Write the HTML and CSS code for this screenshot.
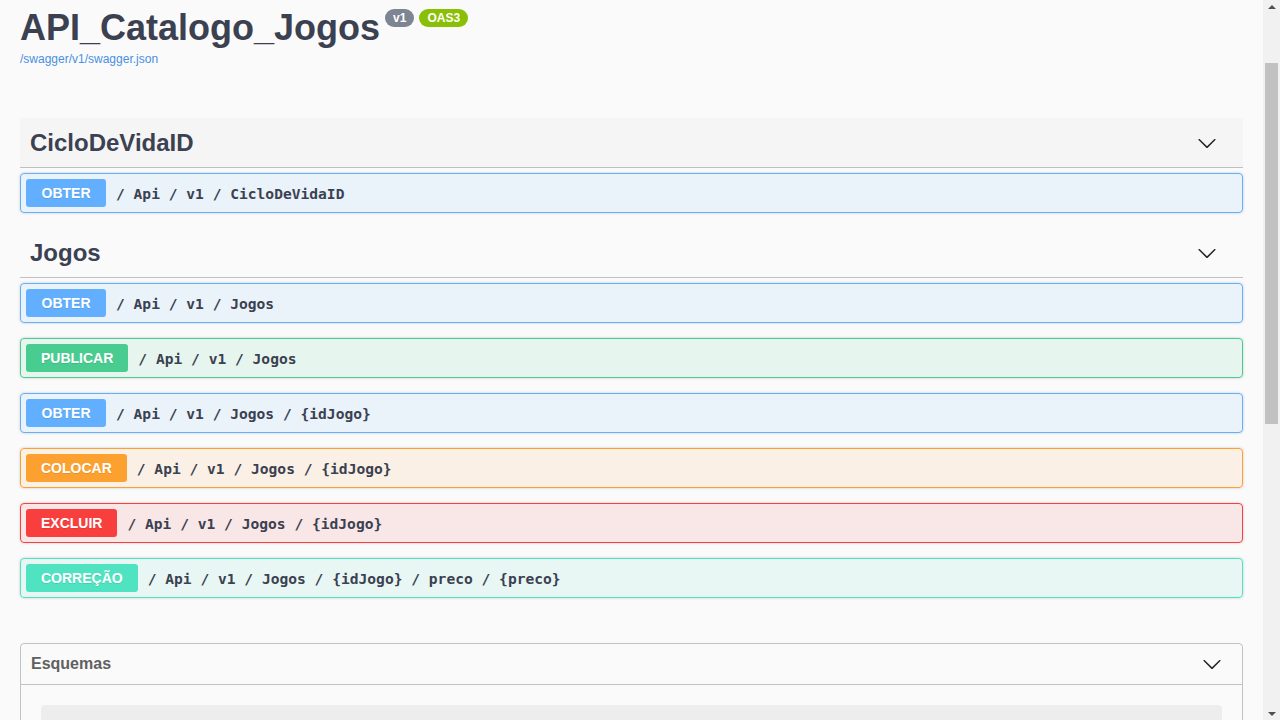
FILE: index.html
```html
<!DOCTYPE html>
<html lang="pt">
<head>
<meta charset="utf-8">
<title>Swagger UI</title>
<link rel="stylesheet" href="styles.css">
</head>
<body>
<div class="topbar"></div>
<div class="wrapper">
  <section class="info">
    <h2 class="title"><span class="title-text">API_Catalogo_Jogos</span><small class="badge badge-version">v1</small><small class="badge badge-oas">OAS3</small></h2>
    <a class="spec-link" href="#">/swagger/v1/swagger.json</a>
  </section>

  <section class="tag-section">
    <h3 class="opblock-tag is-hovered">
      <span class="tag-name">CicloDeVidaID</span>
      <button class="expand" type="button" aria-label="Expandir"><svg class="arrow" viewBox="0 0 20 20" width="20" height="20"><path d="M17.418 6.109c.272-.268.709-.268.979 0s.271.701 0 .969l-7.908 7.83c-.27.268-.707.268-.979 0l-7.908-7.83c-.27-.268-.27-.701 0-.969.271-.268.709-.268.979 0L10 13.25l7.418-7.141z"/></svg></button>
    </h3>
    <div class="opblock op-get"><div class="summary"><span class="method">OBTER</span><span class="path">/ Api / v1 / CicloDeVidaID</span></div></div>
  </section>

  <section class="tag-section">
    <h3 class="opblock-tag">
      <span class="tag-name">Jogos</span>
      <button class="expand" type="button" aria-label="Expandir"><svg class="arrow" viewBox="0 0 20 20" width="20" height="20"><path d="M17.418 6.109c.272-.268.709-.268.979 0s.271.701 0 .969l-7.908 7.83c-.27.268-.707.268-.979 0l-7.908-7.83c-.27-.268-.27-.701 0-.969.271-.268.709-.268.979 0L10 13.25l7.418-7.141z"/></svg></button>
    </h3>
    <div class="opblock op-get"><div class="summary"><span class="method">OBTER</span><span class="path">/ Api / v1 / Jogos</span></div></div>
    <div class="opblock op-post"><div class="summary"><span class="method">PUBLICAR</span><span class="path">/ Api / v1 / Jogos</span></div></div>
    <div class="opblock op-get"><div class="summary"><span class="method">OBTER</span><span class="path">/ Api / v1 / Jogos / {idJogo}</span></div></div>
    <div class="opblock op-put"><div class="summary"><span class="method">COLOCAR</span><span class="path">/ Api / v1 / Jogos / {idJogo}</span></div></div>
    <div class="opblock op-delete"><div class="summary"><span class="method">EXCLUIR</span><span class="path">/ Api / v1 / Jogos / {idJogo}</span></div></div>
    <div class="opblock op-patch"><div class="summary"><span class="method">CORREÇÃO</span><span class="path">/ Api / v1 / Jogos / {idJogo} / preco / {preco}</span></div></div>
  </section>

  <section class="models">
    <h4 class="models-head">
      <span class="models-title">Esquemas</span>
      <svg class="arrow" viewBox="0 0 20 20" width="20" height="20"><path d="M17.418 6.109c.272-.268.709-.268.979 0s.271.701 0 .969l-7.908 7.83c-.27.268-.707.268-.979 0l-7.908-7.83c-.27-.268-.27-.701 0-.969.271-.268.709-.268.979 0L10 13.25l7.418-7.141z"/></svg>
    </h4>
    <div class="model-container"></div>
    <div class="model-container"></div>
  </section>
</div>

<div class="scrollbar" aria-hidden="true">
  <span class="sb-btn sb-up"></span>
  <span class="sb-track"><span class="sb-thumb"></span></span>
  <span class="sb-btn sb-down"></span>
</div>
<script src="script.js"></script>
</body>
</html>
```

FILE: styles.css
```css
html {
  background: #fafafa;
  scrollbar-width: none;
}

html::-webkit-scrollbar {
  display: none;
}

body {
  margin: 0;
  padding-right: 17px;
  min-height: 1368px;
  background: #fafafa;
  font-family: "Liberation Sans", Arial, sans-serif;
  color: #3b4151;
}

/* Window scrollbar (drawn over the right edge) */
.scrollbar {
  position: fixed;
  top: 0;
  right: 0;
  width: 17px;
  height: 100vh;
  display: flex;
  flex-direction: column;
  background: #f1f1f1;
}

.sb-btn {
  flex: 0 0 17px;
  display: flex;
  justify-content: center;
}

.sb-up {
  align-items: flex-start;
  padding-top: 5px;
  box-sizing: border-box;
}

.sb-up::before {
  content: "";
  border-left: 4px solid transparent;
  border-right: 4px solid transparent;
  border-bottom: 4px solid #505050;
}

.sb-down {
  align-items: flex-end;
  padding-bottom: 4px;
  box-sizing: border-box;
}

.sb-down::before {
  content: "";
  border-left: 4px solid transparent;
  border-right: 4px solid transparent;
  border-top: 4px solid #505050;
}

.sb-track {
  flex: 1;
  padding: 46px 2px 0;
}

.sb-thumb {
  display: block;
  height: 361px;
  background: #c1c1c1;
}

.topbar {
  height: 50px;
  background: #1b1b1b;
}

.wrapper {
  padding: 0 20px;
}

/* Info */
.info {
  padding-top: 49px;
  margin-bottom: 52px;
}

.title {
  display: flex;
  align-items: flex-start;
  margin: 0;
  font-size: 36px;
  font-weight: 700;
  color: #3b4151;
}

.title-text {
  line-height: 41px;
}

.badge {
  margin: 2px 0 0 5px;
  padding: 2px 8px;
  border-radius: 57px;
  font-size: 12px;
  line-height: 14px;
  font-weight: 700;
  color: #fff;
}

.badge-version {
  background: #7d8492;
}

.badge-oas {
  background: #89bf04;
}

.spec-link {
  display: block;
  margin-top: 4px;
  font-size: 12px;
  line-height: 14px;
  color: #4990e2;
  text-decoration: none;
}

/* Tags */
.tag-section {
  display: flex;
  flex-direction: column;
}

.opblock-tag {
  display: flex;
  align-items: center;
  margin: 0 0 5px;
  padding: 10px 20px 10px 10px;
  border-bottom: 1px solid rgba(59, 65, 81, 0.3);
  font-size: 24px;
  font-weight: 700;
  color: #3b4151;
}

.opblock-tag.is-hovered {
  background: rgba(0, 0, 0, 0.02);
}

.tag-name {
  flex: 1;
  line-height: 29px;
}

.expand {
  display: flex;
  padding: 0 6px;
  border: none;
  background: none;
}

.arrow {
  display: block;
  fill: #222;
}

/* Operations */
.opblock {
  margin: 0 0 15px;
  border: 1px solid;
  border-radius: 4px;
  box-shadow: 0 0 3px rgba(0, 0, 0, 0.19);
}

.summary {
  display: flex;
  align-items: center;
  padding: 5px;
}

.method {
  box-sizing: border-box;
  min-width: 80px;
  padding: 6px 15px;
  border-radius: 3px;
  font-size: 14px;
  line-height: 16px;
  font-weight: 700;
  text-align: center;
  color: #fff;
  text-shadow: 0 1px 0 rgba(0, 0, 0, 0.1);
}

.path {
  padding: 1px 10px 0;
  font-family: "DejaVu Sans Mono", "Liberation Mono", monospace;
  font-size: 14.6px;
  font-weight: 700;
  color: #3b4151;
}

.op-get {
  border-color: #61affe;
  background: rgba(97, 175, 254, 0.1);
}
.op-get .method {
  background: #61affe;
}

.op-post {
  border-color: #49cc90;
  background: rgba(73, 204, 144, 0.1);
}
.op-post .method {
  background: #49cc90;
}

.op-put {
  border-color: #fca130;
  background: rgba(252, 161, 48, 0.1);
}
.op-put .method {
  background: #fca130;
}

.op-delete {
  border-color: #f93e3e;
  background: rgba(249, 62, 62, 0.1);
}
.op-delete .method {
  background: #f93e3e;
}

.op-patch {
  border-color: #50e3c2;
  background: rgba(80, 227, 194, 0.1);
}
.op-patch .method {
  background: #50e3c2;
}

/* Models */
.models {
  margin: 30px 0;
  border: 1px solid rgba(59, 65, 81, 0.3);
  border-radius: 4px;
}

.models-head {
  display: flex;
  align-items: center;
  justify-content: space-between;
  margin: 0 0 5px;
  padding: 10px 20px 10px 10px;
  border-bottom: 1px solid rgba(59, 65, 81, 0.3);
  font-size: 16px;
  line-height: 20px;
  font-weight: 700;
  color: #606060;
}

.model-container {
  height: 44px;
  margin: 0 20px 15px;
  border-radius: 4px;
  background: rgba(0, 0, 0, 0.05);
}

.model-container:first-of-type {
  margin-top: 20px;
}
```

FILE: script.js
```js
window.scrollTo(0, 92);
window.addEventListener('load', function () {
  window.scrollTo(0, 92);
});
```
